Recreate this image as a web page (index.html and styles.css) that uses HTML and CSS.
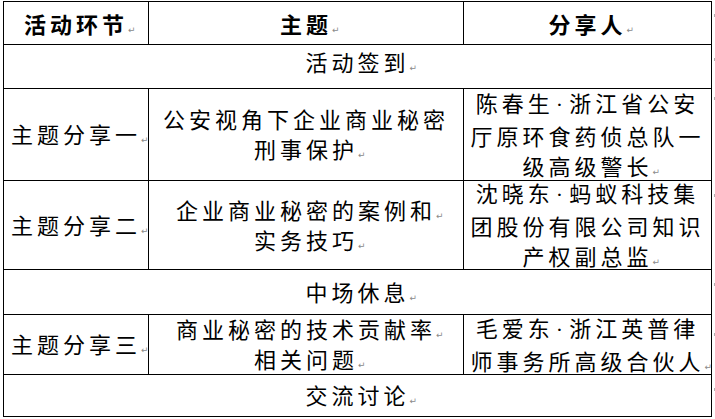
FILE: index.html
```html
<!DOCTYPE html>
<html lang="zh-CN">
<head>
<meta charset="utf-8">
<title>活动议程</title>
<link rel="stylesheet" href="styles.css">
</head>
<body>
<div class="sheet">
  <div class="cell first top head"><p class="para">活动环节<span class="pm">↵</span></p></div>
  <div class="cell top head"><p class="para">主题<span class="pm">↵</span></p></div>
  <div class="cell top head"><p class="para">分享人<span class="pm">↵</span></p></div>
  <div class="eor"><i class="tick"></i></div>

  <div class="cell first span up"><p class="para">活动签到<span class="pm">↵</span></p></div>
  <div class="eor"><i class="tick"></i></div>

  <div class="cell first"><p class="para">主题分享一<span class="pm">↵</span></p></div>
  <div class="cell"><p class="para">公安视角下企业商业秘密<br>刑事保护<span class="pm">↵</span></p></div>
  <div class="cell"><p class="para">陈春生<span class="dot">·</span>浙江省公安<br>厅原环食药侦总队一<br>级高级警长<span class="pm">↵</span></p></div>
  <div class="eor"><i class="tick tick-hi"></i></div>

  <div class="cell first"><p class="para">主题分享二<span class="pm">↵</span></p></div>
  <div class="cell"><p class="para">企业商业秘密的案例和<span class="pm">↵</span><br>实务技巧<span class="pm">↵</span></p></div>
  <div class="cell"><p class="para">沈晓东<span class="dot">·</span>蚂蚁科技集<br>团股份有限公司知识<br>产权副总监<span class="pm">↵</span></p></div>
  <div class="eor"><i class="tick"></i></div>

  <div class="cell first span"><p class="para">中场休息<span class="pm">↵</span></p></div>
  <div class="eor"><i class="tick"></i></div>

  <div class="cell first"><p class="para">主题分享三<span class="pm">↵</span></p></div>
  <div class="cell"><p class="para">商业秘密的技术贡献率<span class="pm">↵</span><br>相关问题<span class="pm">↵</span></p></div>
  <div class="cell"><p class="para">毛爱东<span class="dot">·</span>浙江英普律<br>师事务所高级合伙人<span class="pm">↵</span></p></div>
  <div class="eor"><i class="tick tick-lo"></i></div>

  <div class="cell first span"><p class="para">交流讨论<span class="pm">↵</span></p></div>
  <div class="eor"><i class="tick"></i></div>
</div>
</body>
</html>
```

FILE: styles.css
```css
html, body {
  margin: 0;
  padding: 0;
  background: #ffffff;
}

body {
  width: 715px;
  height: 419px;
  overflow: hidden;
  font-family: "Noto Sans CJK SC", "Noto Sans CJK JP", sans-serif;
  color: #000000;
}

.sheet {
  display: grid;
  grid-template-columns: 146px 315px 248px 4px;
  grid-template-rows: 44px 44px 92px 89px 45px 60px 42px;
  margin: 1px 0 0 3px;
}

.cell {
  box-sizing: border-box;
  border-right: 1px solid #000000;
  border-bottom: 1px solid #000000;
  display: flex;
  align-items: center;
  justify-content: center;
  padding: 0 0 3px 0;
  overflow: visible;
}

.cell.first {
  border-left: 1px solid #000000;
}

.cell.top {
  border-top: 1px solid #000000;
}

.cell.span {
  grid-column: 1 / 4;
}

.cell.up {
  padding-bottom: 12px;
}

.cell.head {
  padding-bottom: 0;
}

.para {
  margin: 0;
  font-size: 22px;
  line-height: 30px;
  letter-spacing: 4px;
  text-align: center;
  white-space: nowrap;
  font-weight: 400;
}

.head .para {
  font-weight: 700;
}

.pm {
  display: inline-block;
  width: 0;
  letter-spacing: 0;
  font-family: "DejaVu Sans", sans-serif;
  font-size: 9px;
  font-weight: 400;
  color: #8a8a8a;
  line-height: 10px;
  vertical-align: baseline;
}

.dot {
  font-family: "Liberation Serif", serif;
  padding: 0 2px;
}

.eor {
  padding: 13px 0 0 2px;
}

.tick {
  display: block;
  width: 1px;
  height: 3px;
  background: #b0b0b0;
}

.tick-hi {
  margin-top: -5px;
}

.tick-lo {
  margin-top: 5px;
}
```
